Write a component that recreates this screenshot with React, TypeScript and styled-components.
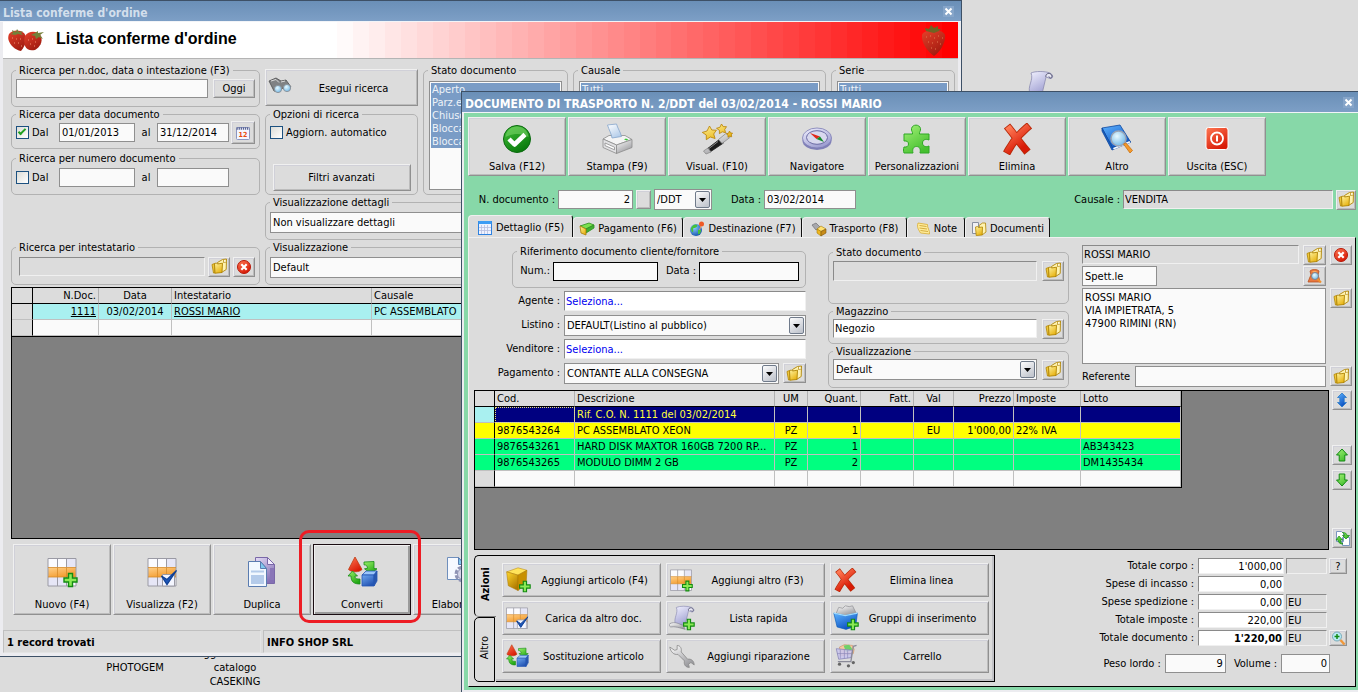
import React from 'react';
import styled, { createGlobalStyle, css } from 'styled-components';

const FACE = '#dcdcdc';
const GREEN = '#87d8a8';
const LINE = '#b2b2b2';
const FIELD = '#fafafa';
const DARK = '#3d5066';

const GlobalStyle = createGlobalStyle`
  *, *::before, *::after { box-sizing: border-box; }
  body {
    margin: 0;
    background: ${FACE};
    color: #000;
    font-family: "DejaVu Sans Condensed", "DejaVu Sans", sans-serif;
    font-size: 11px;
    line-height: 14px;
  }
  button, input, select, textarea { font: inherit; color: inherit; }
`;

/* ---------- desktop and windows ---------- */

const Desktop = styled.div`
  position: relative;
  min-height: 100vh;
  overflow: hidden;
`;

const DesktopItem = styled.div<{ $x: number; $y: number; $w: number }>`
  position: absolute;
  left: ${p => p.$x}px;
  top: ${p => p.$y}px;
  width: ${p => p.$w}px;
  text-align: center;
`;

const Defs = styled.svg`
  position: absolute;
  width: 0;
  height: 0;
`;

const windowBase = css`
  position: absolute;
  border-top: 1px solid ${DARK};
  background: ${FACE};
`;

const ListWindow = styled.section`
  ${windowBase}
  left: 0;
  top: 0;
  width: calc(100% - 396px);
  border-bottom: 1px solid ${DARK};
  border-right: 1px solid ${DARK};
`;

const DocWindow = styled.section`
  ${windowBase}
  left: 461px;
  right: 0;
  top: 91px;
  border-left: 1px solid ${DARK};
`;

const TitleBar = styled.header<{ $dim?: boolean }>`
  display: flex;
  align-items: center;
  justify-content: space-between;
  height: 21px;
  padding: 3px ${p => (p.$dim ? 7 : 4)}px 0 3px;
  border-bottom: 1px solid #f2f4f8;
  background: linear-gradient(#6a8fb7, #7d9fc6);
  color: ${p => (p.$dim ? '#d3dfec' : '#fff')};
  font-size: 12px;
  font-weight: bold;
  white-space: nowrap;
`;

const CloseButton = styled.button`
  display: flex;
  padding: 1px;
  margin-bottom: 3px;
  border: 0;
  background: #86a5c9;
`;

const ListBody = styled.div`
  border: 3px solid #ececf0;
  border-top: 0;
`;

const DocBody = styled.div`
  padding: 4px 2px 3px 4px;
  border-left: 2px solid #ececf0;
  border-bottom: 2px solid #ececf0;
  background: ${GREEN};
`;

/* ---------- shared controls ---------- */

const bevel = css`
  border: 1px solid;
  border-color: #f0f0f0 #909090 #909090 #f0f0f0;
  background: ${FACE};
  box-shadow: inset 1px 1px #d0d0d8, inset -1px -1px #bcbcbc;
`;

const IconButton = styled.button<{ $w?: number; $h?: number }>`
  ${bevel}
  display: flex;
  flex: none;
  align-items: center;
  justify-content: center;
  width: ${p => p.$w ?? 22}px;
  height: ${p => p.$h ?? 20}px;
  padding: 0;
`;

const TextButton = styled.button<{ $w?: number; $h?: number }>`
  ${bevel}
  flex: none;
  width: ${p => (p.$w ? `${p.$w}px` : 'auto')};
  height: ${p => p.$h ?? 20}px;
  padding: 1px 0 0;
`;

const ToolButton = styled.button<{ $tall?: boolean; $current?: boolean }>`
  ${bevel}
  position: relative;
  display: flex;
  flex: none;
  flex-direction: column;
  align-items: center;
  gap: ${p => (p.$tall ? 10 : 5)}px;
  width: 98px;
  height: ${p => (p.$tall ? 71 : 59)}px;
  padding: ${p => (p.$tall ? 11 : 5)}px 0 0;
  white-space: nowrap;
  ${p => p.$current && css`
    z-index: 1;
    border-color: #1a0d12;
    box-shadow: inset 1px 1px #f0f0f0, inset -2px -2px #9a9a9a;
    &::after {
      content: '';
      position: absolute;
      inset: -15px -11px -9px -15px;
      border: 3px solid #ed1c24;
      border-radius: 10px;
      pointer-events: none;
    }
  `}
`;

const RowButton = styled.button<{ $h?: number }>`
  ${bevel}
  display: flex;
  align-items: center;
  height: ${p => p.$h ?? 34}px;
  padding: 0 2px;
  white-space: nowrap;
  span { flex: 1; padding-top: 2px; text-align: center; }
`;

const Field = styled.input<{ $w?: number; $kind?: 'sunken' | 'black' | 'off'; $right?: boolean; $bold?: boolean; $blue?: boolean; $h?: number }>`
  width: ${p => (p.$w ? `${p.$w}px` : 'auto')};
  flex: ${p => (p.$w ? 'none' : '1')};
  min-width: 0;
  height: ${p => p.$h ?? 19}px;
  padding: 0 2px;
  border: 1px solid #8f8f8f;
  border-radius: 0;
  background: ${FIELD};
  text-align: ${p => (p.$right ? 'right' : 'left')};
  font-weight: ${p => (p.$bold ? 'bold' : 'normal')};
  color: ${p => (p.$blue ? '#0000f0' : '#000')};
  outline: 0;
  ${p => p.$kind === 'black' && css`border-color: #000;`}
  ${p => p.$kind === 'sunken' && css`
    border-color: #8a8a8a #f0f0f0 #f0f0f0 #8a8a8a;
    background: #fff;
    padding: 0 1px;
  `}
  ${p => p.$kind === 'off' && css`
    border-color: #8a8a8a #f0f0f0 #f0f0f0 #8a8a8a;
    background: ${FACE};
    padding: 0 1px;
  `}
`;

const SelectBox = styled.div<{ $w?: number }>`
  display: flex;
  align-items: center;
  flex: ${p => (p.$w ? 'none' : '1')};
  width: ${p => (p.$w ? `${p.$w}px` : 'auto')};
  min-width: 0;
  height: 21px;
  padding: 0 1px 0 2px;
  border: 1px solid #8f8f8f;
  background: ${FIELD};
  select {
    flex: 1;
    min-width: 0;
    padding: 1px 0 0;
    border: 0;
    appearance: none;
    background: transparent;
    outline: 0;
  }
`;

function Dropdown({ value, width, id, label }: { value: string; width?: number; id?: string; label?: string }) {
  return (
    <SelectBox $w={width}>
      <select id={id} aria-label={label} defaultValue={value}><option>{value}</option></select>
      <svg width="15" height="17" viewBox="0 0 15 17" pointerEvents="none">
        <rect x=".5" y=".5" width="14" height="16" rx="1.5" fill="url(#gArrow)" stroke="#6f7a8a" />
        <path d="M4 7h7l-3.500 4z" fill="#000" />
      </svg>
    </SelectBox>
  );
}

const Group = styled.fieldset<{ $h?: number; $indent?: number }>`
  min-width: 0;
  margin: 0 0 0 ${p => p.$indent ?? 0}px;
  height: ${p => (p.$h ? `${p.$h}px` : 'auto')};
  padding: 0 4px;
  border: 1px solid ${LINE};
  border-radius: 5px;
  legend {
    height: 14px;
    padding: 0 3px;
    line-height: 16px;
    white-space: nowrap;
  }
`;

const Line = styled.div<{ $gap?: number; $h?: number; $indent?: number }>`
  display: flex;
  align-items: center;
  gap: ${p => p.$gap ?? 5}px;
  height: ${p => p.$h ?? 23}px;
  padding-left: ${p => p.$indent ?? 0}px;
  white-space: nowrap;
`;

const GroupFooter = styled.div`
  display: flex;
  align-items: flex-end;
  justify-content: center;
  height: 47px;
`;

const CheckLabel = styled.label<{ $w?: number }>`
  display: flex;
  align-items: center;
  gap: 3px;
  width: ${p => (p.$w ? `${p.$w}px` : 'auto')};
  input {
    appearance: none;
    display: grid;
    flex: none;
    width: 13px;
    height: 13px;
    margin: 0;
    border: 1px solid #1c5180;
    background: linear-gradient(135deg, #dcdcd7, #fff);
  }
  input:checked::before {
    content: '';
    width: 8px;
    height: 4px;
    margin: 2px 0 0 1px;
    border: solid #21a121;
    border-width: 0 0 2px 2px;
    transform: rotate(-45deg);
  }
`;

const Between = styled.span`
  width: 22px;
  text-align: center;
`;

/* ---------- list window parts ---------- */

/* The banner fades to red in even bands. */
const BANDS = 39;
const bandStops = Array.from({ length: BANDS }, (_, i) => {
  const from = 35 + (i * 65) / BANDS;
  const to = 35 + ((i + 1) * 65) / BANDS;
  const c = Math.round(250 - (i * 250) / (BANDS - 1));
  return `rgb(255,${c},${c}) ${from.toFixed(2)}% ${to.toFixed(2)}%`;
}).join(', ');

const Banner = styled.div`
  display: flex;
  align-items: center;
  gap: 11px;
  height: 37px;
  padding: 0 11px 0 4px;
  border-bottom: 1px solid #b4b4b4;
  background: linear-gradient(90deg, #fff 0 35%, ${bandStops});
  h1 {
    flex: 1;
    margin: 0;
    padding-bottom: 2px;
    font: bold 16px/20px "Liberation Sans", Arial, sans-serif;
  }
`;

const Filters = styled.div`
  display: grid;
  grid-template-columns: 249px 153px 145px 1fr 124px;
  grid-template-rows: 44px 44px 44px 45px 45px;
  column-gap: 5px;
  padding: 4px 3px 2px 8px;
`;

const Cell = styled.div<{ $col: string; $row: string; $top?: number }>`
  display: grid;
  grid-column: ${p => p.$col};
  grid-row: ${p => p.$row};
  padding-top: ${p => p.$top ?? 0}px;
`;

const ListBox = styled.ul`
  height: 109px;
  margin: 4px 1px 0;
  padding: 1px;
  border: 1px solid #8f8f8f;
  background: ${FIELD};
  list-style: none;
  li {
    height: 13px;
    padding-left: 1px;
    background: #7a9cc6;
    color: #eef3f8;
    line-height: 14px;
    overflow: hidden;
    white-space: nowrap;
  }
`;

const GridFrame = styled.div<{ $h: number }>`
  flex: 1;
  min-width: 0;
  height: ${p => p.$h}px;
  border: 1px solid #000;
  background: #808080;
  overflow: hidden;
`;

const ListGridWrap = styled.div`
  display: flex;
  padding: 0 3px 0 8px;
`;

const DataTable = styled.table<{ $w: number }>`
  width: ${p => p.$w}px;
  table-layout: fixed;
  border-collapse: separate;
  border-spacing: 0;
  border-bottom: 1px solid #000;
  border-right: 1px solid #000;
  th, td {
    height: 16px;
    padding: 1px 2px 0;
    border-right: 1px solid #c0c0c0;
    border-bottom: 1px solid #c0c0c0;
    background: ${FIELD};
    font-weight: normal;
    line-height: 14px;
    text-align: left;
    white-space: nowrap;
    overflow: hidden;
    text-overflow: ellipsis;
  }
  th { background: ${FACE}; border-right-color: #b0b0b0; }
  thead th { border-bottom-color: #000; }
  tr > :first-child { border-right-color: #000; }
  a { color: #000; }
`;

const TCell = styled.td<{ $align?: string; $bg?: string; $fg?: string; $focus?: boolean }>`
  && {
    text-align: ${p => p.$align ?? 'left'};
    ${p => p.$bg && css`background: ${p.$bg};`}
    color: ${p => p.$fg ?? '#000'};
    ${p => p.$focus && css`outline: 1px dotted #e8e07a; outline-offset: -1px;`}
  }
`;
const HCell = styled.th<{ $align?: string; $bg?: string }>`
  && {
    text-align: ${p => p.$align ?? 'left'};
    ${p => p.$bg && css`background: ${p.$bg};`}
  }
`;

const BottomBar = styled.div`
  display: flex;
  gap: 2px;
  padding: 5px 10px 15px;
`;

const StatusBar = styled.footer`
  display: grid;
  grid-template-columns: 258px 1fr;
  gap: 2px;
  font-weight: bold;
  div {
    height: 23px;
    padding: 5px 3px 3px;
    border: 1px solid #c0c0c0;
    border-right-color: #e4e4e4;
    border-bottom-color: #e4e4e4;
  }
`;

/* ---------- document window parts ---------- */

const Toolbar = styled.div`
  display: flex;
  gap: 2px;
`;

const DocRow = styled.div`
  display: flex;
  align-items: center;
  gap: 3px;
  height: 21px;
  margin: 13px 0 5px;
  padding-left: 10px;
  white-space: nowrap;
`;

const HeadLabel = styled.label<{ $w: number }>`
  width: ${p => p.$w}px;
  text-align: right;
`;

const Spacer = styled.div`
  flex: 1;
`;

const Tabs = styled.nav`
  display: flex;
  align-items: flex-end;
  height: 22px;
`;

const Tab = styled.button<{ $w: number; $on?: boolean }>`
  display: flex;
  align-items: center;
  justify-content: center;
  gap: 3px;
  width: ${p => p.$w}px;
  height: ${p => (p.$on ? 22 : 20)}px;
  padding: 3px 0 0;
  border: 0;
  border-left: 1px solid #efefef;
  border-top: 1px solid #efefef;
  border-right: 1px solid #101010;
  border-radius: 4px 3px 0 0;
  background: ${FACE};
  white-space: nowrap;
`;

const Panel = styled.div`
  padding: 6px 3px 4px 5px;
  border: 1px solid #000;
  border-left-color: #f0f0f0;
  border-top-color: #f0f0f0;
  background: ${FACE};
`;

const FormArea = styled.div`
  display: grid;
  grid-template-columns: 332px 241px 1fr;
  height: 146px;
`;

const MiddleColumn = styled.div`
  padding-top: 1px;
  margin: 0 0 0 22px;
  width: 241px;
`;

const AddressGrid = styled.div`
  display: grid;
  grid-template-columns: 1fr 23px 22px;
  grid-template-rows: 19px 20px 76px 21px;
  gap: 2px 4px;
  margin-left: 35px;
  padding-top: 1px;
  > textarea, > div { grid-column: 1 / 3; }
`;

const Address = styled.textarea`
  margin: 0;
  padding: 2px;
  border: 1px solid #8f8f8f;
  border-radius: 0;
  background: ${FIELD};
  line-height: 13px;
  resize: none;
  outline: 0;
`;

const FormRows = styled.div`
  display: grid;
  gap: 4px;
  margin-top: 3px;
`;

const FormRow = styled.div`
  display: flex;
  align-items: center;
  gap: 4px;
  height: 20px;
  label { width: 86px; text-align: right; white-space: nowrap; }
`;

const ItemsArea = styled.div`
  display: flex;
  gap: 3px;
`;

const SideButtons = styled.div`
  display: grid;
  grid-template-rows: 55px 25px 58px 22px;
  width: 20px;
`;

const BottomArea = styled.div`
  display: flex;
  justify-content: space-between;
  padding-top: 5px;
`;

const Actions = styled.div`
  display: flex;
  height: 127px;
`;

const SideTabs = styled.nav`
  display: flex;
  flex-direction: column;
  width: 22px;
`;

const SideTab = styled.button<{ $on?: boolean }>`
  width: ${p => (p.$on ? 22 : 21)}px;
  height: ${p => (p.$on ? 62 : 65)}px;
  padding: 0;
  border: 1px solid #000;
  border-right-width: ${p => (p.$on ? 0 : 1)}px;
  border-bottom-color: ${p => (p.$on ? '#808080' : '#000')};
  border-radius: 5px 0 0 5px;
  background: ${FACE};
  font-weight: ${p => (p.$on ? 'bold' : 'normal')};
  span {
    writing-mode: vertical-rl;
    transform: rotate(180deg);
  }
`;

const ActionGrid = styled.div`
  display: grid;
  grid-template-columns: repeat(3, 159px);
  grid-auto-rows: 34px;
  gap: 4px 5px;
  padding: 7px 5px 0 6px;
  border: 1px solid #000;
  border-left: 0;
  box-shadow: inset -2px -2px #c2c2c6;
`;

const Totals = styled.div`
  padding: 3px 5px 0 0;
`;

const TotalsGrid = styled.div`
  display: grid;
  grid-template-columns: 1fr 86px 41px 18px;
  grid-auto-rows: 16px;
  gap: 2px;
  align-items: center;
  label { text-align: right; white-space: nowrap; padding-right: 2px; }
`;

const Weights = styled.div`
  display: flex;
  align-items: center;
  gap: 4px;
  margin-top: 8px;
  padding-left: 4px;
  label:nth-of-type(2) { margin-left: 4px; }
`;

/* ---------- icons ---------- */

function Gradients() {
  const lin = (id: string, a: string, b: string) => (
    <linearGradient id={id} x1="0" y1="0" x2=".6" y2="1"><stop offset="0" stopColor={a} /><stop offset="1" stopColor={b} /></linearGradient>
  );
  return (
    <Defs aria-hidden="true">
      <defs>
        {lin('gArrow', '#fff', '#c3c7cf')}
        {lin('gGreen', '#9af06a', '#22a814')}
        {lin('gLeaf', '#a4f278', '#46c030')}
        {lin('gOk', '#45c23c', '#0a7a0c')}
        {lin('gRed', '#ff7a55', '#d81a06')}
        {lin('gYellow', '#fff3a0', '#e8b414')}
        {lin('gGold', '#ffd82e', '#b07a00')}
        {lin('gBlue', '#5fb4ff', '#0a4fc0')}
        {lin('gCube', '#6fa8f0', '#2455b4')}
        {lin('gOrange', '#ffd08a', '#f39a2c')}
        {lin('gPaper', '#fff', '#b4cdea')}
        {lin('gViolet', '#e4dcf6', '#8470b4')}
        {lin('gSilver', '#fff', '#9a9a9e')}
        {lin('gLav', '#f2f2ff', '#9c9cd0')}
        {lin('gBerry', '#e8402a', '#a01c10')}
        <radialGradient id="gLens" cx=".4" cy=".35" r=".7"><stop offset="0" stopColor="#e8faff" /><stop offset="1" stopColor="#6fb6e6" /></radialGradient>
        <radialGradient id="gGlobe" cx=".35" cy=".3" r=".8"><stop offset="0" stopColor="#8fd0ff" /><stop offset="1" stopColor="#0a4aa8" /></radialGradient>
      </defs>
    </Defs>
  );
}

type IconProps = { s?: number };
const Svg = ({ s = 32, box = 32, children }: { s?: number; box?: number; children: React.ReactNode }) => (
  <svg width={s} height={s} viewBox={`0 0 ${box} ${box}`} aria-hidden="true">{children}</svg>
);

const Plus = () => (
  <path d="M22.500 17.500h4v4.500h4.500v4h-4.500v4.500h-4v-4.500h-4.500v-4h4.500z" fill="#8bea55" stroke="#128a12" strokeWidth="1.400" />
);
const GridBase = () => (
  <>
    <path d="M2 2.500h28v27h-28z" fill="#fbfbff" />
    <path d="M21 2.500h9v9h-9zM2 21h19v9h-19z" fill="#e6e6f6" />
    <path d="M2 11.500h28v9.500h-28z" fill="url(#gOrange)" />
    <path d="M2 2.500h28v27.500h-28zM11.500 2.500v9M20.500 2.500v9M11.500 21v9M20.500 21v9" fill="none" stroke="#9a9aa4" />
    <path d="M2 11.500h28M2 21h28M11.500 12v9M20.500 12v9" stroke="#d48a2a" strokeWidth=".8" />
  </>
);
const GridPlus = ({ s }: IconProps) => <Svg s={s}><GridBase /><Plus /></Svg>;
const GridCheck = ({ s }: IconProps) => (
  <Svg s={s}><GridBase /><path d="M16.500 18.500h12v11.500h-12z" fill="#f4f6ff" stroke="#9a9aa4" /><path d="M15.500 20l5.500 8.500 9.500-14-9.500 9z" fill="#1d56b8" stroke="#0f3f94" strokeWidth="1.300" /></Svg>
);
const Duplicate = () => (
  <Svg>
    <path d="M9.500 1.500h12l7 7v19h-19z" fill="url(#gViolet)" stroke="#7a68a8" />
    <path d="M21.500 1.500v7h7z" fill="#f2ecff" stroke="#7a68a8" />
    <path d="M24 12h4v12h-4z" fill="#8a76b8" />
    <path d="M2.500 5.500h12l6 7v18h-18z" fill="#f2f8ff" stroke="#5a7cb0" />
    <path d="M14.500 5.500v7h6z" fill="#7fc8ee" stroke="#5a7cb0" />
    <path d="M5 14.500h13v2h-13zM5 19h13v9h-13z" fill="#b4cbea" />
  </Svg>
);
const Convert = ({ s }: IconProps) => (
  <Svg s={s}>
    <path d="M9 1l7 12.500c-3 3-10 3-13.500 0z" fill="url(#gRed)" stroke="#c03a10" strokeWidth=".8" />
    <path d="M18 6l10-.5v7l3 .3-6 5-6.500-5 3-.5c0-2-1-3.500-3.500-3.500z" fill="url(#gGreen)" stroke="#158a15" strokeWidth=".8" />
    <path d="M6.500 15l5 5h-2.500c0 3 2 3 5 3v5c-6 0-9-2-9-8h-3z" fill="url(#gGreen)" stroke="#158a15" strokeWidth=".8" />
    <path d="M16 19l4-4h11l-3 4z" fill="#9cc6fa" stroke="#2455b4" strokeWidth=".8" />
    <path d="M16 19h12v11h-12z" fill="url(#gCube)" stroke="#2455b4" strokeWidth=".8" />
    <path d="M28 19l3-4v10l-3 5z" fill="#2a58ae" stroke="#2455b4" strokeWidth=".8" />
  </Svg>
);
const GearDoc = () => (
  <Svg>
    <path d="M1.500 1.500h11l6 7v15h-17z" fill="#f6f9ff" stroke="#6f8fbc" />
    <path d="M12.500 1.500v7h6z" fill="#7fc8ee" stroke="#5a7cb0" />
    <circle cx="17" cy="18" r="7" fill="none" stroke="#8f93b4" strokeWidth="3" strokeDasharray="4 1.500" />
    <circle cx="17" cy="18" r="5.500" fill="#d4d4e6" stroke="#8f93b4" />
  </Svg>
);
const Ok = () => (
  <Svg>
    <circle cx="16" cy="16" r="13.500" fill="url(#gOk)" stroke="#0b6a10" />
    <path d="M4.500 14c1-14 22-14 23 0-7-4-15-4-23 0z" fill="#8fe07a" opacity=".45" />
    <path d="M8 16l5.500 5.500 10.500-10" fill="none" stroke="#fff" strokeWidth="4.500" strokeLinejoin="round" />
  </Svg>
);
const Printer = () => (
  <Svg>
    <path d="M2 16l6-3.500h16l7 4-15.500 5.500z" fill="#f4f4f4" stroke="#8c8c8c" strokeWidth=".8" />
    <path d="M6.500 2l9-1c1 4 4 8 5 12.500l-9.500 1.500c-.5-4-3-8-4.500-13z" fill="url(#gPaper)" stroke="#84a4cc" strokeWidth=".8" />
    <path d="M2 16l13.500 6v8.500l-13.500-6z" fill="#e2e2e4" stroke="#8c8c8c" strokeWidth=".8" />
    <path d="M15.500 22l15.500-5.500v8l-15.500 6z" fill="url(#gSilver)" stroke="#8c8c8c" strokeWidth=".8" />
    <path d="M4 20l9.500 4.200v2.600l-9.500-4.200z" fill="#fff" stroke="#8c8c8c" strokeWidth=".8" />
    <path d="M25 15.500l2.500 1.200-2 .8-2.500-1.200z" fill="#38c838" />
  </Svg>
);
const Wand = () => (
  <Svg>
    <path d="M6 26l13-10 3.500 4-13.500 9z" fill="#1c1c1c" stroke="#1c1c1c" strokeWidth=".8" />
    <path d="M2.500 28l4.500-3 3 4-5 2zM17.500 16.500l8-6.500 4 4-8.500 6.500z" fill="url(#gSilver)" stroke="#8c8c8c" strokeWidth=".8" />
    <path d="M8 25.500l9-7" stroke="#888" />
    <path d="M8.500 3l2.300 4 4.600.2-2.700 3.800 1.400 4.500-4.800-1.500-4 2.700v-4.700l-4-2.600 4.700-1.400zM20.500 1l1.700 2.600 3.300.1-1.800 2.800.9 3.200-3.300-.9-2.900 1.800v-3.300l-2.900-2 3.400-1zM28.500 8l1 2 2 .1-1.200 1.700.4 2-1.900-.7-1.800 1.200v-2.200l-1.700-1.300 2.200-.6z" fill="url(#gYellow)" stroke="#b88000" strokeWidth=".8" />
  </Svg>
);
const Compass = () => (
  <Svg>
    <ellipse cx="16" cy="17.500" rx="14.500" ry="9.500" fill="#8080b8" />
    <ellipse cx="16" cy="15" rx="14.500" ry="10" fill="url(#gLav)" stroke="#7c7cb4" strokeWidth=".8" />
    <ellipse cx="16" cy="14.500" rx="10.500" ry="6.800" fill="#d8d8ee" stroke="#6c6ca4" />
    <path d="M9 10l10 3.500-3.500 2.500z" fill="#e02818" />
    <path d="M23 19l-4-5.500-3.500 2.500z" fill="#138a2a" />
  </Svg>
);
const Puzzle = () => (
  <Svg>
    <path d="M3 11h8.500c.5-2-1.500-3-1-5.500 1-4.500 8-4.500 9 0 .5 2.500-1.500 3.500-1 5.500h9.500v6c-3.500-1.500-6.500 0-6.500 3s3 4.500 6.500 3v7h-9c1-4-.5-6.500-3.500-6.500s-4.500 2.500-3.500 6.500h-9c-.7-2-.7-4 0-6 3 .5 4.500-1 4.500-3s-1.500-3.500-4.500-3z" fill="url(#gLeaf)" stroke="#2fa824" />
  </Svg>
);
const CrossIcon = ({ s }: IconProps) => (
  <Svg s={s}>
    <path d="M8.500 6c4 5 9 12 15.500 20M25.500 5c-7 6-13 13-18 22" fill="none" stroke="#b82808" strokeWidth="8" strokeLinecap="square" />
    <path d="M8.500 6c4 5 9 12 15.500 20M25.500 5c-7 6-13 13-18 22" fill="none" stroke="url(#gRed)" strokeWidth="6.200" strokeLinecap="square" />
  </Svg>
);
const BookLens = () => (
  <Svg>
    <path d="M1 5l18-3 10 16-17 8z" fill="url(#gBlue)" stroke="#0c48a0" strokeWidth=".8" />
    <path d="M1 5v3l10 19 19-8-1.500-1-17 6.500z" fill="#1a60c0" stroke="#0c48a0" strokeWidth=".8" />
    <path d="M12 25l16.500-7 .8 1.500-16.500 7z" fill="#f6faff" />
    <circle cx="17.500" cy="15.500" r="7.500" fill="url(#gLens)" stroke="#9aa4b4" strokeWidth="1.600" />
    <path d="M22.500 21l2.500-1 6.500 7.500-2.500 2.500z" fill="#f59a2c" stroke="#c87010" strokeWidth=".8" />
  </Svg>
);
const Power = () => (
  <Svg>
    <rect x="5" y="4.500" width="22" height="22" rx="2.500" fill="url(#gRed)" stroke="#fff" />
    <circle cx="16" cy="15.500" r="6" fill="none" stroke="#fff" strokeWidth="1.800" />
    <path d="M16 12.500v6" stroke="#fff" strokeWidth="2" />
  </Svg>
);
const BoxPlus = () => (
  <Svg s={26}>
    <path d="M2 6l14-5 11 3-11 6z" fill="#ffe45a" stroke="#b07a00" strokeWidth=".6" />
    <path d="M2 6l14 4v19l-12-6z" fill="url(#gGold)" stroke="#a87400" strokeWidth=".6" />
    <path d="M16 10l11-6-1 17-10 8z" fill="#c89000" stroke="#a87400" strokeWidth=".6" />
    <Plus />
  </Svg>
);
const Scroll = ({ s = 26, plus = true }: { s?: number; plus?: boolean }) => (
  <Svg s={s}>
    <path d="M9 3c4-2 14-2 19 0 4 2 3 6 0 5.500l-4-1.500-4 17h-12c-3-8 4-14 1-21z" fill="url(#gLav)" stroke="#8a8ab0" strokeWidth=".8" />
    <path d="M24 7c-1-4 5-5 6-1 0 3-3 2-3 .5" fill="#e8e8f4" stroke="#555570" />
    <path d="M1 23c6-3 12 0 17 3l2 4c-7-2-13-4-18-3-2-1-2-3-1-4z" fill="url(#gSilver)" stroke="#80808c" strokeWidth=".8" />
    {plus && <Plus />}
  </Svg>
);
const BasketPlus = () => (
  <Svg s={26}>
    <path d="M4 10l3-7 5 1 3-3 5 1 4-1 4 8v4h-24z" fill="url(#gSilver)" stroke="#88888c" strokeWidth=".8" />
    <path d="M1 10l14 3 15-3-2 16-12 4-11-3z" fill="url(#gBlue)" stroke="#0c5cb8" strokeWidth=".8" />
    <path d="M1 10l14 3 15-3" fill="none" stroke="#9fdcff" strokeWidth="1.600" />
    <Plus />
  </Svg>
);
const Wrench = () => (
  <Svg s={26}>
    <path d="M1 5l6 4 3-1 0-5c4 0 6 4 5 8l8 9c4-1 8 2 8 7l-4-3-3 2 1 4c-5 0-7-4-6-8l-8-8c-5 1-9-3-10-9z" fill="url(#gSilver)" stroke="#8a8a8a" />
  </Svg>
);
const Cart = () => (
  <Svg s={26}>
    <path d="M8 5l6-3 10 1 2 5-1 5-16 3z" fill="#f6c9a0" stroke="#c07a4a" strokeWidth=".6" />
    <path d="M13 3l7-1 4 6-8 3z" fill="#6ed06a" />
    <path d="M4 7l20 2-2 9-15 2z" fill="#c9c6ee" fillOpacity=".85" stroke="#8a86b8" />
    <path d="M9 8v11M14 8.500v10.500M18 9v9.500M5 13h18" stroke="#8a86b8" strokeWidth=".8" />
    <path d="M29 3l-4 1-3 19h-16" fill="none" stroke="#8a8a98" strokeWidth="1.600" />
    <circle cx="8" cy="26" r="2" fill="#666" /><circle cx="19" cy="28" r="2" fill="#666" /><circle cx="25" cy="24" r="2" fill="#666" />
  </Svg>
);
const Binoculars = () => (
  <Svg s={24} box={24}>
    <path d="M1 5l7-3 5 3 5-1 5 7-4 4-5-3-3 4-5-1z" fill="#808284" stroke="#4c4c4e" strokeWidth=".8" />
    <path d="M3 5l5-1.500 3 3M13 6l4-1" stroke="#dcdcdc" fill="none" />
    <circle cx="10" cy="13" r="3.600" fill="url(#gLens)" stroke="#8c949c" />
    <circle cx="19" cy="12" r="3.600" fill="url(#gLens)" stroke="#8c949c" />
  </Svg>
);
const CalendarIcon = () => (
  <Svg s={16} box={16}>
    <rect x="1.500" y="2.500" width="13" height="12" rx="1" fill="#f4f6ff" stroke="#8c96c0" />
    <path d="M1.500 3.500h13" stroke="#5b6694" strokeWidth="2.400" strokeDasharray="1.300 .8" />
    <text x="8" y="11.500" fontSize="7" fontWeight="bold" fill="#e8480e" textAnchor="middle">12</text>
  </Svg>
);
const Folder = () => (
  <Svg s={17} box={17}>
    <path d="M6.500 4.500l5-3 4-.5-.3 10.500-4.700 3z" fill="#fff3b0" stroke="#b08404" strokeWidth=".9" />
    <path d="M12.500 1.500v3l3-.5" fill="#fffdf0" stroke="#b08404" strokeWidth=".7" />
    <path d="M1 6.500l2.500-1 .5 9.500h-1.500z" fill="#f0c83a" stroke="#b08404" strokeWidth=".8" />
    <path d="M3.500 5.500l2-.5 1 1 5-.8-.5 9.300-7 .7z" fill="url(#gYellow)" stroke="#b08404" strokeWidth=".9" />
  </Svg>
);
const Remove = () => (
  <Svg s={16} box={16}>
    <circle cx="8" cy="8" r="6.500" fill="url(#gRed)" stroke="#b81808" />
    <path d="M5.300 5.300l5.400 5.400M10.700 5.300l-5.400 5.400" stroke="#fff" strokeWidth="2.200" />
  </Svg>
);
const PersonLens = () => (
  <Svg s={17} box={17}>
    <path d="M4 3c2-2 7-2 9 0l-1 4 1 3 1 4h-12l2-5 1-2z" fill="#e87840" stroke="#b85020" strokeWidth=".8" />
    <path d="M5.500 4c1-1 5-1 6 0z" fill="#ffc070" />
    <circle cx="9" cy="8" r="3.500" fill="url(#gLens)" stroke="#7c8490" />
    <path d="M11.500 11l3.500 3.500" stroke="#f0902c" strokeWidth="2" />
  </Svg>
);
const UpDown = () => (
  <Svg s={16} box={16}><path d="M8 1l4.500 4.500h-2.300v5h2.300l-4.500 4.500-4.500-4.500h2.300v-5h-2.300z" fill="url(#gBlue)" stroke="#2a78c8" strokeWidth=".8" /></Svg>
);
const ArrowUp = () => (
  <Svg s={16} box={16}><path d="M8 2l5.500 6h-2.700v6h-5.600v-6h-2.700z" fill="url(#gLeaf)" stroke="#128a12" /></Svg>
);
const ArrowDown = () => (
  <Svg s={16} box={16}><path d="M8 14l5.500-6h-2.700v-6h-5.600v6h-2.700z" fill="url(#gLeaf)" stroke="#128a12" /></Svg>
);
const SwapDocs = () => (
  <Svg s={17} box={17}>
    <path d="M2.500 1.500h5l2 2v8h-7zM8.500 7.500h7v8h-7z" fill="#fff" stroke="#7a96c0" />
    <path d="M5 6l3.500 4h-2c0 2 1 3 2.500 4-3 0-4.500-1-4.800-4h-2.200zM12 9l-3.500-3.500h2c0-1-.5-2-2-3 3 0 4.200 1 4.500 3h2.500z" fill="url(#gGreen)" stroke="#128a12" strokeWidth=".7" />
  </Svg>
);
const ZoomPlus = () => (
  <Svg s={15} box={15}>
    <circle cx="6" cy="5.500" r="4.500" fill="#b9ecf4" stroke="#78a8b8" />
    <path d="M6 3v5M3.500 5.500h5" stroke="#128a12" strokeWidth="1.500" />
    <path d="M9.500 9l4 4.500" stroke="#f0983a" strokeWidth="2.400" />
  </Svg>
);
const TableIcon = () => (
  <Svg s={16} box={16}>
    <rect x="1.500" y="1.500" width="13" height="13" fill="#eef2ff" stroke="#2d82e0" />
    <path d="M1.500 2.500h13" stroke="#3c9cf4" strokeWidth="3" />
    <path d="M4.500 5v9M7.500 5v9M10.500 5v9M2 7.500h12M2 10.500h12" stroke="#b6bede" strokeWidth=".8" />
  </Svg>
);
const Money = () => (
  <Svg s={16} box={16}>
    <path d="M1 5l9-3 5 2-8 4z" fill="#7be050" stroke="#2c9020" strokeWidth=".8" />
    <path d="M7 8l8-4v3l-8 5z" fill="#3fb030" stroke="#2c9020" strokeWidth=".8" />
    <path d="M1 5l6 3v6l-5-2z" fill="url(#gYellow)" stroke="#a87c08" strokeWidth=".8" />
  </Svg>
);
const Globe = () => (
  <Svg s={16} box={16}>
    <circle cx="7" cy="9" r="6" fill="url(#gGlobe)" />
    <path d="M2 7c2-4 5-4 6-3s-1 3-3 3 0 3-1 4-2-2-2-4zM9 9l3 0c0 3-2 5-3 4z" fill="#46c23a" />
    <circle cx="12.500" cy="3" r="2.500" fill="#f05a28" />
    <path d="M12 5l-1.500 4" stroke="#f09060" />
  </Svg>
);
const Truck = () => (
  <Svg s={16} box={16}>
    <path d="M1 4l4-2 4 4-4 3z" fill="#a8a8ac" stroke="#77777c" strokeWidth=".8" />
    <path d="M6 8l4-3 5 3-5 2.500z" fill="#ffe070" stroke="#a87c08" strokeWidth=".6" />
    <path d="M6 8l4 2.500v4.500l-4-3z" fill="#f0b820" stroke="#a87c08" strokeWidth=".6" />
    <path d="M15 8l-5 2.500v4.500l5-3z" fill="#c88c18" stroke="#7a5410" strokeWidth=".6" />
  </Svg>
);
const NoteIcon = () => (
  <Svg s={16} box={16}>
    <path d="M3 2l9.500 1.500c-.5 3 2.500 6 2 9.500l-9-1c-1.500-3-4-5-2.500-10z" fill="#ffec9a" stroke="#d8ac30" strokeWidth=".8" />
    <path d="M4.500 4.500l7 1M4.500 7l7.500 1M5.500 9.500l7.500 1" stroke="#c89c28" strokeWidth=".8" />
  </Svg>
);
const DocFolder = () => (
  <Svg s={16} box={16}>
    <path d="M1.500 1.500h6v11h-6z" fill="#f0f0f4" stroke="#8890a0" />
    <path d="M8 4.500l3.500-2.500h3l.5 9-4 3z" fill="#fff3b0" stroke="#b08404" strokeWidth=".8" />
    <path d="M4.500 6l2-.5 1 1 4-.5-.3 8-6 .5z" fill="url(#gYellow)" stroke="#b08404" strokeWidth=".8" />
  </Svg>
);
const CloseGlyph = () => (
  <svg width="9" height="9" viewBox="0 0 9 9" aria-hidden="true"><path d="M1.500 1.500l6 6M7.500 1.500l-6 6" stroke="#fff" strokeWidth="2" /></svg>
);

const BerryPair = () => (
  <svg width="38" height="26" viewBox="0 0 38 26" aria-hidden="true">
    <path d="M2 7c3-4 10-5 15-1 4 5 2 12-3 18-6-1-11-6-12.500-11-.5-2-.3-4 .5-6z" fill="url(#gBerry)" />
    <path d="M18 9c4-6 13-5 16 0 2 6-1 11-6 14-5 1-8 0-10-4-1-4-1-7 0-10z" fill="url(#gBerry)" />
    <path d="M5 3l4 2 1-3 2 3 4-1-2 2 2 2-5-1-3 1-5-1 3-1zM28 6l3-2 0 2 6-1-4 3 3 4-4-2-3 2-1-3-4-1z" fill="#74803a" />
    <path d="M5 11h1M9 12h1M7 16h1M11 16h1M13 12h1M21 13h1M25 12h1M23 17h1M28 15h1M14 19h1M27 19h1" stroke="#f09070" />
  </svg>
);
const Berry = () => (
  <svg width="27" height="33" viewBox="0 0 27 33" aria-hidden="true">
    <path d="M2 11c2-6 20-7 23 0 1 8-6 18-11 21-6-4-13-13-12-21z" fill="url(#gBerry)" />
    <path d="M6 7l-1-3 4 1 2-4 3 3 4-2 0 3 3 0-2 2-5 2-4-1z" fill="#6e6424" />
    <path d="M6 13h1M10 12h1M14 14h1M18 12h1M22 14h1M8 18h1M12 19h1M17 18h1M20 20h1M11 24h1M15 25h1" stroke="#e07850" />
  </svg>
);

/* ---------- data ---------- */

const listActions = [
  { label: 'Nuovo (F4)', icon: <GridPlus /> },
  { label: 'Visualizza (F2)', icon: <GridCheck /> },
  { label: 'Duplica', icon: <Duplicate /> },
  { label: 'Converti', icon: <Convert />, current: true },
  { label: 'Elaborazioni', icon: <GearDoc /> },
];

const docActions = [
  { label: 'Salva (F12)', icon: <Ok /> },
  { label: 'Stampa (F9)', icon: <Printer /> },
  { label: 'Visual. (F10)', icon: <Wand /> },
  { label: 'Navigatore', icon: <Compass /> },
  { label: 'Personalizzazioni', icon: <Puzzle /> },
  { label: 'Elimina', icon: <CrossIcon /> },
  { label: 'Altro', icon: <BookLens /> },
  { label: 'Uscita (ESC)', icon: <Power /> },
];

const tabs = [
  { label: 'Dettaglio (F5)', icon: <TableIcon />, w: 105, on: true },
  { label: 'Pagamento (F6)', icon: <Money />, w: 110 },
  { label: 'Destinazione (F7)', icon: <Globe />, w: 119 },
  { label: 'Trasporto (F8)', icon: <Truck />, w: 105 },
  { label: 'Note', icon: <NoteIcon />, w: 58 },
  { label: 'Documenti', icon: <DocFolder />, w: 85 },
];

const columns = [
  { name: 'Cod.', w: 80, align: 'left' },
  { name: 'Descrizione', w: 200, align: 'left' },
  { name: 'UM', w: 33, align: 'center' },
  { name: 'Quant.', w: 53, align: 'right' },
  { name: 'Fatt.', w: 53, align: 'right' },
  { name: 'Val', w: 40, align: 'center' },
  { name: 'Prezzo', w: 60, align: 'right' },
  { name: 'Imposte', w: 67, align: 'left' },
  { name: 'Lotto', w: 100, align: 'left' },
];

const rows = [
  { head: '#a9f0f0', bg: '#000080', fg: '#ffff3c', cells: ['', 'Rif. C.O. N. 1111 del 03/02/2014', '', '', '', '', '', '', ''] },
  { head: '#ffff00', bg: '#ffff00', cells: ['9876543264', 'PC ASSEMBLATO XEON', 'PZ', '1', '', 'EU', "1'000,00", '22% IVA', ''] },
  { head: '#00ff80', bg: '#00ff80', cells: ['9876543261', 'HARD DISK MAXTOR 160GB 7200 RP...', 'PZ', '1', '', '', '', '', 'AB343423'] },
  { head: '#00ff80', bg: '#00ff80', cells: ['9876543265', 'MODULO DIMM 2 GB', 'PZ', '2', '', '', '', '', 'DM1435434'] },
  { head: FACE, bg: FIELD, cells: ['', '', '', '', '', '', '', '', ''] },
];

const lineActions = [
  { label: 'Aggiungi articolo (F4)', icon: <BoxPlus /> },
  { label: 'Aggiungi altro (F3)', icon: <GridPlus s={24} /> },
  { label: 'Elimina linea', icon: <CrossIcon s={24} /> },
  { label: 'Carica da altro doc.', icon: <GridCheck s={24} /> },
  { label: 'Lista rapida', icon: <Scroll /> },
  { label: 'Gruppi di inserimento', icon: <BasketPlus /> },
  { label: 'Sostituzione articolo', icon: <Convert s={24} /> },
  { label: 'Aggiungi riparazione', icon: <Wrench /> },
  { label: 'Carrello', icon: <Cart /> },
];

const totals = [
  { id: 'corpo', label: 'Totale corpo :', value: "1'000,00", cur: '' },
  { id: 'incasso', label: 'Spese di incasso :', value: '0,00' },
  { id: 'spedizione', label: 'Spese spedizione :', value: '0,00', cur: 'EU' },
  { id: 'imposte', label: 'Totale imposte :', value: '220,00', cur: 'EU' },
  { id: 'documento', label: 'Totale documento :', value: "1'220,00", cur: 'EU', bold: true },
];

/* ---------- windows ---------- */

function OrderList() {
  return (
    <ListWindow>
      <TitleBar $dim>
        <span>Lista conferme d'ordine</span>
        <CloseButton aria-label="Chiudi"><CloseGlyph /></CloseButton>
      </TitleBar>
      <ListBody>
        <Banner><BerryPair /><h1>Lista conferme d'ordine</h1><Berry /></Banner>
        <Filters>
          <Cell $col="1" $row="1">
            <Group>
              <legend>Ricerca per n.doc, data o intestazione (F3)</legend>
              <Line><Field aria-label="Ricerca" /><TextButton $w={42} $h={19}>Oggi</TextButton></Line>
            </Group>
          </Cell>
          <Cell $col="1" $row="2">
            <Group $h={42}>
              <legend>Ricerca per data documento</legend>
              <Line $gap={0}>
                <CheckLabel $w={43}><input type="checkbox" defaultChecked />Dal</CheckLabel>
                <Field $w={76} aria-label="Data dal" defaultValue="01/01/2013" />
                <Between>al</Between>
                <Field $w={72} aria-label="Data al" defaultValue="31/12/2014" />
                <Spacer />
                <IconButton $w={24} $h={23} aria-label="Calendario"><CalendarIcon /></IconButton>
              </Line>
            </Group>
          </Cell>
          <Cell $col="1" $row="3">
            <Group>
              <legend>Ricerca per numero documento</legend>
              <Line $gap={0} $h={25}>
                <CheckLabel $w={43}><input type="checkbox" />Dal</CheckLabel>
                <Field $w={76} aria-label="Numero dal" />
                <Between>al</Between>
                <Field $w={72} aria-label="Numero al" />
              </Line>
            </Group>
          </Cell>
          <Cell $col="1" $row="5">
            <Group>
              <legend>Ricerca per intestatario</legend>
              <Line $gap={3} $h={25} $indent={3}>
                <Field $kind="off" readOnly aria-label="Intestatario" />
                <IconButton aria-label="Apri"><Folder /></IconButton>
                <IconButton aria-label="Rimuovi"><Remove /></IconButton>
              </Line>
            </Group>
          </Cell>
          <Cell $col="2" $row="1" $top={6}>
            <RowButton $h={37}><Binoculars /><span>Esegui ricerca</span></RowButton>
          </Cell>
          <Cell $col="2" $row="2 / 4">
            <Group $h={88}>
              <legend>Opzioni di ricerca</legend>
              <Line><CheckLabel><input type="checkbox" />Aggiorn. automatico</CheckLabel></Line>
              <GroupFooter><TextButton $w={138} $h={27}>Filtri avanzati</TextButton></GroupFooter>
            </Group>
          </Cell>
          <Cell $col="2 / 6" $row="4">
            <Group>
              <legend>Visualizzazione dettagli</legend>
              <Line $h={27}><Dropdown value="Non visualizzare dettagli" label="Visualizzazione dettagli" /></Line>
            </Group>
          </Cell>
          <Cell $col="2 / 6" $row="5">
            <Group>
              <legend>Visualizzazione</legend>
              <Line $h={27}><Dropdown value="Default" label="Visualizzazione" /></Line>
            </Group>
          </Cell>
          <Cell $col="3" $row="1 / 4">
            <Group>
              <legend>Stato documento</legend>
              <ListBox role="listbox" aria-label="Stato documento">
                {['Aperto', 'Parz.evaso', 'Chiuso', 'Bloccato', 'Bloccato'].map((t, i) => <li key={i} role="option" aria-selected>{t}</li>)}
              </ListBox>
            </Group>
          </Cell>
          {['Causale', 'Serie'].map((name, i) => (
            <Cell key={name} $col={String(4 + i)} $row="1 / 4">
              <Group>
                <legend>{name}</legend>
                <ListBox role="listbox" aria-label={name}><li role="option" aria-selected>Tutti</li></ListBox>
              </Group>
            </Cell>
          ))}
        </Filters>
        <ListGridWrap>
          <GridFrame $h={252}>
            <DataTable $w={920}>
              <colgroup><col width="21" /><col width="66" /><col width="73" /><col width="200" /><col width="560" /></colgroup>
              <thead>
                <tr>
                  <th /><HCell $align="right">N.Doc.</HCell><HCell $align="center">Data</HCell><th>Intestatario</th><th>Causale</th>
                </tr>
              </thead>
              <tbody>
                <tr>
                  <th />
                  <TCell $bg="#a9f0f0" $align="right"><a href="#doc">1111</a></TCell>
                  <TCell $bg="#a9f0f0" $align="center">03/02/2014</TCell>
                  <TCell $bg="#a9f0f0"><a href="#cliente">ROSSI MARIO</a></TCell>
                  <TCell $bg="#a9f0f0">PC ASSEMBLATO</TCell>
                </tr>
                <tr><th /><td /><td /><td /><td /></tr>
              </tbody>
            </DataTable>
          </GridFrame>
        </ListGridWrap>
        <BottomBar>
          {listActions.map(a => <ToolButton key={a.label} $tall $current={a.current}>{a.icon}{a.label}</ToolButton>)}
        </BottomBar>
        <StatusBar><div>1 record trovati</div><div>INFO SHOP SRL</div></StatusBar>
      </ListBody>
    </ListWindow>
  );
}

function TransportDocument() {
  return (
    <DocWindow>
      <TitleBar>
        <span>DOCUMENTO DI TRASPORTO N. 2/DDT del 03/02/2014 - ROSSI MARIO</span>
        <CloseButton aria-label="Chiudi"><CloseGlyph /></CloseButton>
      </TitleBar>
      <DocBody>
        <Toolbar>
          {docActions.map(a => <ToolButton key={a.label}>{a.icon}{a.label}</ToolButton>)}
        </Toolbar>
        <DocRow>
          <HeadLabel htmlFor="ndoc" $w={77}>N. documento :</HeadLabel>
          <Field id="ndoc" $w={75} $right defaultValue="2" />
          <TextButton $w={15} $h={19} aria-label="Numero" />
          <Dropdown width={58} value="/DDT" label="Serie" />
          <HeadLabel htmlFor="data" $w={46}>Data :</HeadLabel>
          <Field id="data" $w={92} defaultValue="03/02/2014" />
          <Spacer />
          <label htmlFor="causale">Causale :</label>
          <Field id="causale" $w={210} $kind="off" readOnly defaultValue="VENDITA" />
          <IconButton $w={20} aria-label="Apri"><Folder /></IconButton>
        </DocRow>
        <Tabs>
          {tabs.map(t => <Tab key={t.label} $w={t.w} $on={t.on}>{t.icon}{t.label}</Tab>)}
        </Tabs>
        <Panel>
          <FormArea>
            <div>
              <Group $h={44} $indent={38}>
                <legend>Riferimento documento cliente/fornitore</legend>
                <Line $h={26} $gap={3}>
                  <HeadLabel htmlFor="rifnum" $w={33}>Num.:</HeadLabel>
                  <Field id="rifnum" $w={105} $kind="black" />
                  <HeadLabel htmlFor="rifdata" $w={35}>Data :</HeadLabel>
                  <Field id="rifdata" $w={100} $kind="black" />
                </Line>
              </Group>
              <FormRows>
                <FormRow><label htmlFor="agente">Agente :</label><Field id="agente" $kind="sunken" $blue $h={20} defaultValue="Seleziona..." /></FormRow>
                <FormRow><label htmlFor="listino">Listino :</label><Dropdown id="listino" value="DEFAULT(Listino al pubblico)" /></FormRow>
                <FormRow><label htmlFor="venditore">Venditore :</label><Field id="venditore" $kind="sunken" $blue $h={20} defaultValue="Seleziona..." /></FormRow>
                <FormRow>
                  <label htmlFor="pagamento">Pagamento :</label><Dropdown id="pagamento" value="CONTANTE ALLA CONSEGNA" />
                  <IconButton $w={23} aria-label="Apri"><Folder /></IconButton>
                </FormRow>
              </FormRows>
            </div>
            <MiddleColumn>
              <Group $h={59}>
                <legend>Stato documento</legend>
                <Line><Field $kind="off" readOnly $h={20} aria-label="Stato documento" /><IconButton aria-label="Apri"><Folder /></IconButton></Line>
              </Group>
              <Group $h={40}>
                <legend>Magazzino</legend>
                <Line $h={21}><Field $kind="sunken" aria-label="Magazzino" defaultValue="Negozio" /><IconButton aria-label="Apri"><Folder /></IconButton></Line>
              </Group>
              <Group $h={44}>
                <legend>Visualizzazione</legend>
                <Line><Dropdown value="Default" label="Visualizzazione" /><IconButton aria-label="Apri"><Folder /></IconButton></Line>
              </Group>
            </MiddleColumn>
            <AddressGrid>
              <Field $kind="off" readOnly aria-label="Cliente" defaultValue="ROSSI MARIO" />
              <IconButton $w={23} aria-label="Apri"><Folder /></IconButton>
              <IconButton aria-label="Rimuovi"><Remove /></IconButton>
              <Line $h={20}>
                <Field $w={75} $h={20} aria-label="Titolo" defaultValue="Spett.le" />
                <Spacer />
                <IconButton $w={23} aria-label="Cerca"><PersonLens /></IconButton>
              </Line>
              <span />
              <Address aria-label="Indirizzo" defaultValue={'ROSSI MARIO\nVIA IMPIETRATA, 5\n47900 RIMINI (RN)'} />
              <IconButton aria-label="Apri"><Folder /></IconButton>
              <Line $h={21}>
                <label htmlFor="referente">Referente</label>
                <Field id="referente" $h={21} />
              </Line>
              <IconButton aria-label="Apri"><Folder /></IconButton>
            </AddressGrid>
          </FormArea>
          <ItemsArea>
            <GridFrame $h={160}>
              <DataTable $w={707}>
                <colgroup><col width="20" />{columns.map(c => <col key={c.name} width={c.w} />)}</colgroup>
                <thead><tr><th />{columns.map(c => <HCell key={c.name} $align={c.align}>{c.name}</HCell>)}</tr></thead>
                <tbody>
                  {rows.map((r, i) => (
                    <tr key={i}>
                      <HCell $bg={r.head} />
                      {r.cells.map((v, j) => (
                        <TCell key={j} $align={columns[j].align} $bg={r.bg} $fg={r.fg} $focus={i === 0 && j === 0}>{v}</TCell>
                      ))}
                    </tr>
                  ))}
                </tbody>
              </DataTable>
            </GridFrame>
            <SideButtons>
              <IconButton $w={20} aria-label="Ordina"><UpDown /></IconButton>
              <IconButton $w={20} aria-label="Su"><ArrowUp /></IconButton>
              <IconButton $w={20} aria-label="Giù"><ArrowDown /></IconButton>
              <IconButton $w={20} aria-label="Scambia"><SwapDocs /></IconButton>
            </SideButtons>
          </ItemsArea>
          <BottomArea>
            <Actions>
              <SideTabs>
                <SideTab $on><span>Azioni</span></SideTab>
                <SideTab><span>Altro</span></SideTab>
              </SideTabs>
              <ActionGrid>
                {lineActions.map(a => <RowButton key={a.label}>{a.icon}<span>{a.label}</span></RowButton>)}
              </ActionGrid>
            </Actions>
            <Totals>
              <TotalsGrid>
                {totals.map((t, i) => (
                  <React.Fragment key={t.id}>
                    <label htmlFor={t.id}>{t.label}</label>
                    <Field id={t.id} $w={86} $h={16} $kind="sunken" $right $bold={t.bold} defaultValue={t.value} />
                    {t.cur === undefined ? <span /> : <Field $w={41} $h={16} $kind="off" readOnly aria-label="Valuta" defaultValue={t.cur} />}
                    {i === 0 && <TextButton $w={18} $h={16}>?</TextButton>}
                    {i === 4 && <IconButton $w={18} $h={16} aria-label="Dettaglio totale"><ZoomPlus /></IconButton>}
                    {i > 0 && i < 4 && <span />}
                  </React.Fragment>
                ))}
              </TotalsGrid>
              <Weights>
                <label htmlFor="peso">Peso lordo :</label>
                <Field id="peso" $w={61} $right defaultValue="9" />
                <label htmlFor="volume">Volume :</label>
                <Field id="volume" $w={49} $right defaultValue="0" />
              </Weights>
            </Totals>
          </BottomArea>
        </Panel>
      </DocBody>
    </DocWindow>
  );
}

export default function App() {
  return (
    <Desktop>
      <GlobalStyle />
      <Gradients />
      <DesktopItem $x={85} $y={661} $w={100}>PHOTOGEM</DesktopItem>
      <DesktopItem $x={193} $y={647} $w={84}>Aggiornamento catalogo CASEKING</DesktopItem>
      <DesktopItem $x={1022} $y={70} $w={32}><Scroll s={32} plus={false} /></DesktopItem>
      <OrderList />
      <TransportDocument />
    </Desktop>
  );
}
